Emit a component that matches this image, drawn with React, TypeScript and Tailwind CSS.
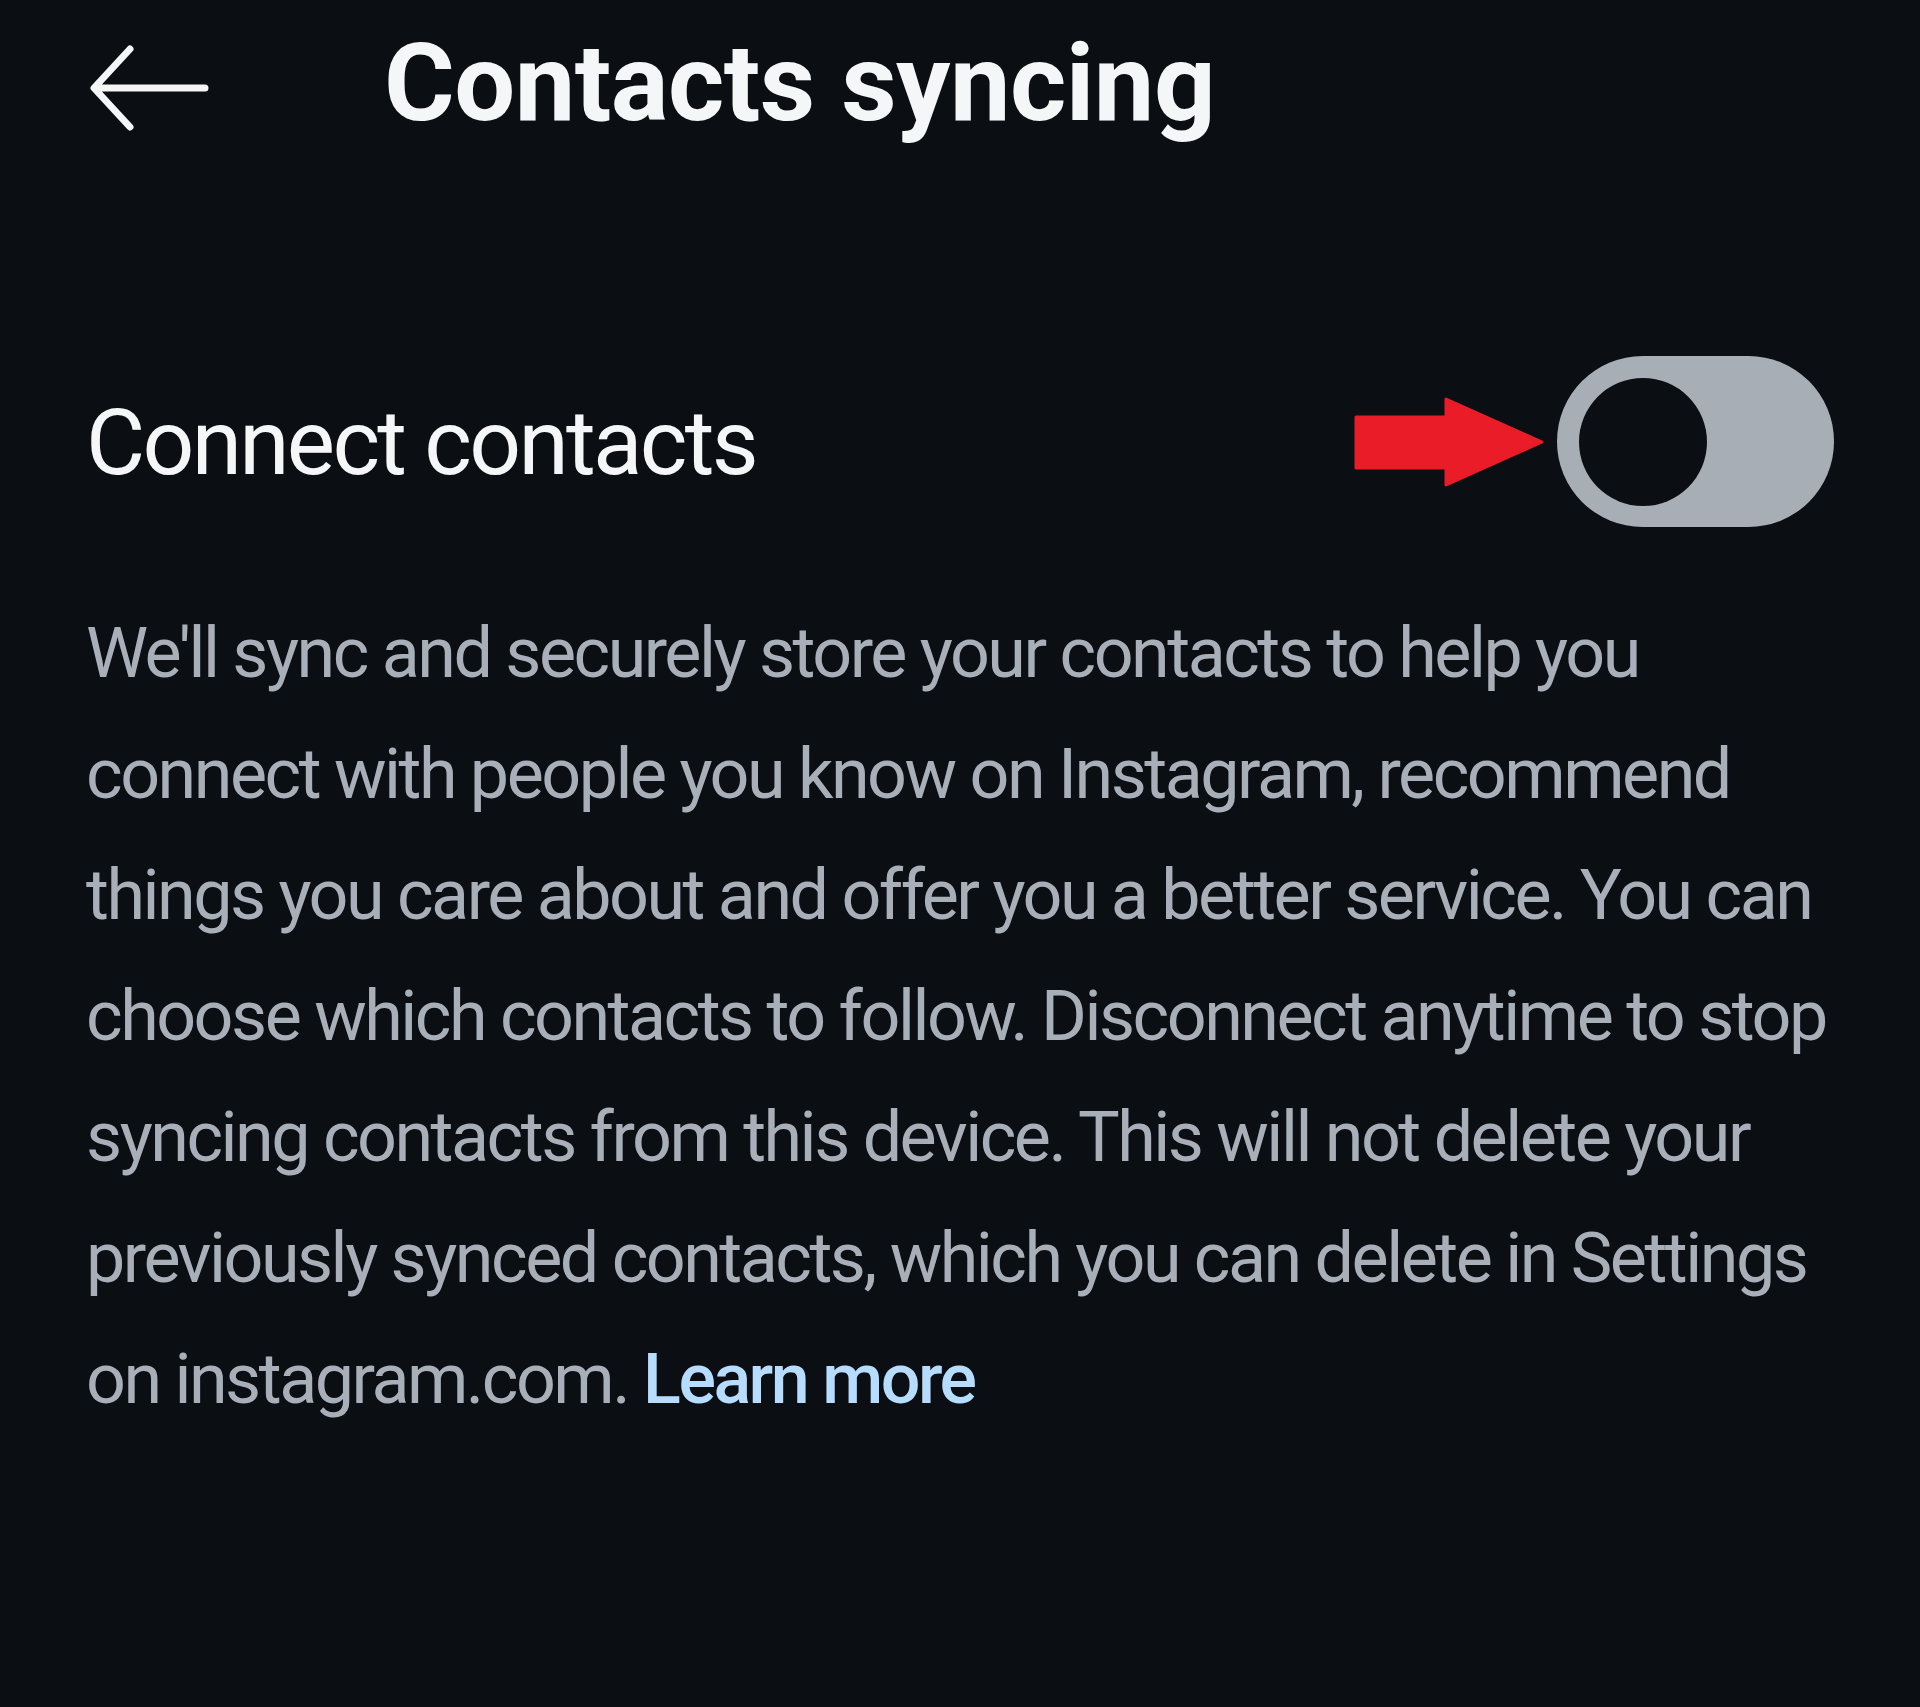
import React, { useState } from 'react'

const LINES = [
  "We'll sync and securely store your contacts to help you",
  'connect with people you know on Instagram, recommend',
  'things you care about and offer you a better service. You can',
  'choose which contacts to follow. Disconnect anytime to stop',
  'syncing contacts from this device. This will not delete your',
  'previously synced contacts, which you can delete in Settings',
]

export default function App() {
  const [connected, setConnected] = useState(false)

  return (
    <div
      className="min-h-screen w-full bg-[#0b0e13] text-[#f5f6f7] px-[86px]"
      style={{ fontFamily: 'Roboto, "Noto Sans", "Liberation Sans", sans-serif' }}
    >
      {/* header */}
      <div className="flex items-center pt-[29px] h-[137px]">
        <button className="w-[122px] h-[90px] flex items-center justify-start mt-[10px] ml-[2px]">
          <svg width="122" height="90" viewBox="0 0 122 90" fill="none">
            <path
              d="M117 45H8M42 6L6 45L42 84"
              stroke="#f5f6f7"
              strokeWidth="7"
              strokeLinecap="round"
              strokeLinejoin="round"
            />
          </svg>
        </button>
        <h1 className="ml-[174px] text-[108px] leading-[108px] font-bold tracking-[-0.5px]">Contacts syncing</h1>
      </div>

      {/* toggle row */}
      <div className="mt-[219px] flex items-center justify-between h-[171px]">
        <span className="text-[91px] leading-[91px] pt-[4px] tracking-[-2.7px]">Connect contacts</span>
        <div className="flex items-center gap-[13px]">
          <svg width="190" height="90" viewBox="0 0 190 90">
            <path d="M2 20H92V2L188 45L92 88V71H2Z" fill="#ea1c27" stroke="#ea1c27" strokeWidth="3" strokeLinejoin="round" />
          </svg>
          <button
            onClick={() => setConnected(!connected)}
            className={`w-[277px] h-[171px] rounded-full flex items-center px-[22px] ${
              connected ? 'bg-[#4a5df9] justify-end' : 'bg-[#a8aeb6] justify-start'
            }`}
          >
            <span className="w-[128px] h-[128px] rounded-full bg-[#0b0e13]" />
          </button>
        </div>
      </div>

      {/* description */}
      <p className="mt-[66px] text-[70px] leading-[121px] tracking-[-2.5px] text-[#a8afb8] whitespace-nowrap">
        {LINES.map((l) => (
          <span key={l} className="block">
            {l}
          </span>
        ))}
        <span className="block">
          on instagram.com. <span className="text-[#b6dcff] font-medium">Learn more</span>
        </span>
      </p>
    </div>
  )
}
